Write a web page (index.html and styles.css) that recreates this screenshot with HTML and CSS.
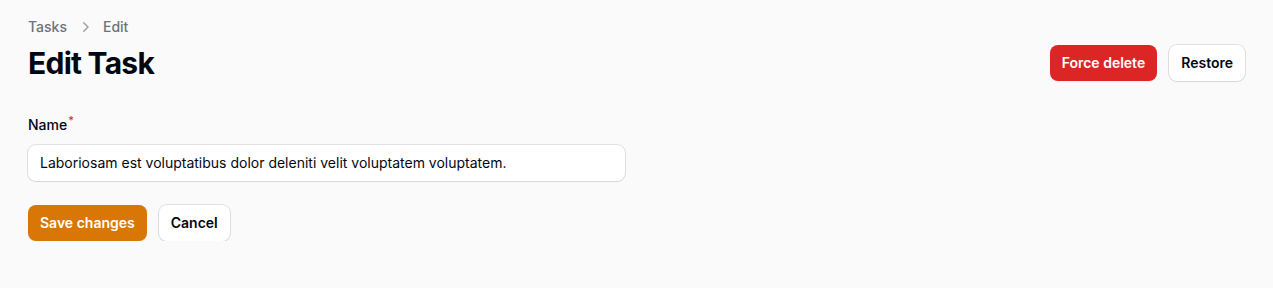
FILE: index.html
```html
<!DOCTYPE html>
<html lang="en">
<head>
<meta charset="utf-8">
<title>Edit Task</title>
<link rel="stylesheet" href="styles.css">
</head>
<body>
<main class="page">
  <header class="header">
    <div class="heading">
      <nav class="breadcrumbs">
        <a class="crumb" href="#">Tasks</a>
        <svg class="chevron" viewBox="0 0 20 20" fill="currentColor" aria-hidden="true"><path fill-rule="evenodd" d="M8.22 5.22a.75.75 0 0 1 1.06 0l4.25 4.25a.75.75 0 0 1 0 1.06l-4.25 4.25a.75.75 0 0 1-1.06-1.06L11.94 10 8.22 6.28a.75.75 0 0 1 0-1.06Z" clip-rule="evenodd"/></svg>
        <span class="crumb">Edit</span>
      </nav>
      <h1 class="title">Edit Task</h1>
    </div>
    <div class="actions">
      <button class="btn btn-danger" type="button">Force delete</button>
      <button class="btn btn-plain" type="button">Restore</button>
    </div>
  </header>
  <form class="form">
    <div class="grid">
      <div class="field">
        <label class="label" for="name">Name<sup class="req">*</sup></label>
        <div class="input-wrap">
          <input class="input" id="name" type="text" value="Laboriosam est voluptatibus dolor deleniti velit voluptatem voluptatem.">
        </div>
      </div>
    </div>
    <div class="form-actions">
      <button class="btn btn-primary" type="button">Save changes</button>
      <button class="btn btn-plain" type="button">Cancel</button>
    </div>
  </form>
</main>
</body>
</html>
```

FILE: styles.css
```css
* { box-sizing: border-box; }
html, body {
  margin: 0;
  padding: 0;
  background: #fafafa;
  font-family: Inter, "Noto Sans", sans-serif;
  color: #030712;
  -webkit-font-smoothing: antialiased;
}
.page {
  padding: 17px 28px 0 28px;
  display: flex;
  flex-direction: column;
  gap: 32px;
}
.header {
  display: flex;
  justify-content: space-between;
  align-items: flex-end;
  gap: 16px;
}
.heading {
  display: flex;
  flex-direction: column;
  gap: 8px;
}
.breadcrumbs {
  display: flex;
  align-items: center;
  gap: 8px;
  height: 20px;
}
.crumb {
  font-size: 14px;
  line-height: 20px;
  font-weight: 500;
  color: #6b7280;
  text-decoration: none;
}
.chevron {
  width: 20px;
  height: 20px;
  color: #9ca3af;
}
.title {
  margin: 0;
  font-size: 30px;
  line-height: 36px;
  font-weight: 700;
  letter-spacing: -0.025em;
  color: #030712;
}
.actions {
  display: flex;
  gap: 12px;
}
.btn {
  font-family: inherit;
  font-size: 14px;
  line-height: 20px;
  font-weight: 600;
  padding: 8px 12px;
  height: 36px;
  border-radius: 8px;
  border: none;
  cursor: pointer;
  box-shadow: 0 1px 2px rgba(0,0,0,0.05);
}
.btn-danger {
  background: #dc2626;
  color: #fff;
}
.btn-primary {
  background: #d97706;
  color: #fff;
}
.btn-plain {
  background: #fff;
  color: #030712;
  box-shadow: 0 0 0 1px rgba(3,7,18,0.1), 0 1px 2px rgba(0,0,0,0.05);
}
.form {
  display: flex;
  flex-direction: column;
  gap: 24px;
}
.grid {
  display: grid;
  grid-template-columns: 1fr 1fr;
  gap: 24px;
}
.field {
  display: flex;
  flex-direction: column;
  gap: 8px;
}
.label {
  font-size: 14px;
  line-height: 24px;
  font-weight: 500;
  color: #030712;
}
.req {
  color: #dc2626;
  font-weight: 500;
  font-size: 11px;
  line-height: 0;
  margin-left: 1px;
}
.input-wrap {
  background: #fff;
  border-radius: 8px;
  box-shadow: 0 0 0 1px rgba(3,7,18,0.1), 0 1px 2px rgba(0,0,0,0.05);
  height: 36px;
  display: flex;
}
.input {
  width: 100%;
  border: none;
  background: transparent;
  outline: none;
  font-family: inherit;
  font-size: 14px;
  line-height: 24px;
  color: #030712;
  padding: 6px 12px;
}
.form-actions {
  display: flex;
  gap: 12px;
}
```
